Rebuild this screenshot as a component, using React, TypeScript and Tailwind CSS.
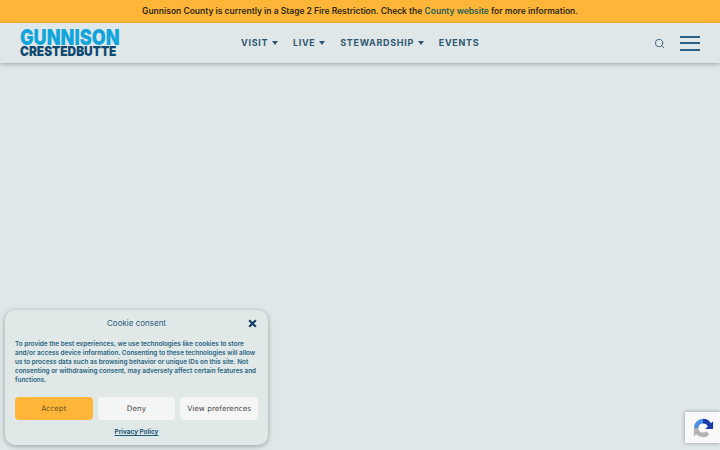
import { Search } from "lucide-react";

const navItems = [
  { label: "VISIT", caret: true },
  { label: "LIVE", caret: true },
  { label: "STEWARDSHIP", caret: true },
  { label: "EVENTS", caret: false },
];

function Caret() {
  return <span className="ml-[4px] h-0 w-0 border-x-[3.5px] border-t-[4px] border-x-transparent border-t-[#2f5670]" />;
}

function Logo() {
  return (
    <div className="flex w-[100px] flex-col items-start font-['Inter',sans-serif] font-black">
      <div className="h-[17px] origin-left scale-x-[0.82] text-[22px] leading-[17px] whitespace-nowrap text-[#12a5dc]">GUNNISON</div>
      <div className="h-[11px] origin-left scale-x-[0.87] text-[13.700px] leading-[11px] whitespace-nowrap text-[#0f4a70]">CRESTEDBUTTE</div>
    </div>
  );
}

function RecaptchaBadge() {
  return (
    <div className="absolute right-0 bottom-[7px] flex h-[31px] w-[35px] items-center justify-end bg-[#f9f9f9] pr-[6px] shadow-[0_0_4px_rgba(0,0,0,0.35)]">
      <svg width="22" height="22" viewBox="0 0 24 24" fill="none">
        <path d="M7 12a5 5 0 0 1 5-5V2A10 10 0 0 0 2 12h5z" fill="#4a90e2" />
        <path d="M12 2a10 10 0 0 1 8.600 4.900L23 4.500V13h-8.500l2.800-2.800A5.500 5.500 0 0 0 12 7V2z" fill="#1c3aa9" />
        <path d="M2 12h5a5 5 0 0 0 8.500 3.500l3.600 3.500A10 10 0 0 1 4.500 18.800L2 21.500V12z" fill="#b4b4b4" />
      </svg>
    </div>
  );
}

function CookieBox() {
  return (
    <div className="absolute bottom-[5px] left-[5px] flex h-[135px] w-[263px] flex-col rounded-[10px] bg-[#e0e8e8] px-[10px] font-['Inter',sans-serif] shadow-[0_1px_5px_rgba(0,0,0,0.32)]">
      <div className="relative flex h-[26px] items-center justify-center text-[8px] text-[#2b5c78]">
        Cookie consent
        <svg className="absolute top-[9px] right-[1px]" width="9" height="9" viewBox="0 0 9 9">
          <path d="M1.200 1.200l6.600 6.600M7.800 1.200L1.200 7.800" stroke="#123f63" strokeWidth="2.200" />
        </svg>
      </div>
      <p className="mt-[4px] h-[45px] text-[6.400px] leading-[9px] font-semibold text-[#2b6580]">
        To provide the best experiences, we use technologies like cookies to store<br />
        and/or access device information. Consenting to these technologies will allow<br />
        us to process data such as browsing behavior or unique IDs on this site. Not<br />
        consenting or withdrawing consent, may adversely affect certain features and<br />
        functions.
      </p>
      <div className="mt-[12px] flex gap-[5px] font-['DejaVu_Sans',sans-serif] text-[7.400px]">
        <button className="h-[23px] w-[78px] rounded-[4px] bg-[#ffb537] text-[#65562a]">Accept</button>
        <button className="h-[23px] w-[78px] rounded-[4px] bg-[#f4f6f6] text-[#4a4a4a]">Deny</button>
        <button className="h-[23px] w-[78px] rounded-[4px] bg-[#f4f6f6] text-[#4a4a4a]">View preferences</button>
      </div>
      <div className="mt-[8px] text-center text-[6.400px] font-bold text-[#1d5878] underline">Privacy Policy</div>
    </div>
  );
}

export default function App() {
  return (
    <div className="relative flex h-[450px] w-[720px] flex-col overflow-hidden bg-[#dfe7e9] font-['Inter',sans-serif]">
      <div className="flex h-[23px] items-center justify-center bg-[#ffb537] pb-[1px] text-[8.500px] font-semibold text-[#2c2a1c]">
        <span>
          Gunnison County is currently in a Stage 2 Fire Restriction. Check the{" "}
          <span className="text-[#1e6058]">County website</span> for more information.
        </span>
      </div>
      <header className="relative flex h-[40px] items-center bg-[#dfe7e9] px-[20px] shadow-[0_1px_4px_rgba(0,0,0,0.3)]">
        <Logo />
        <nav className="ml-[121px] flex items-center gap-[14.700px] text-[9px] font-bold tracking-[0.700px] text-[#2f5670]">
          {navItems.map((item) => (
            <div key={item.label} className="flex items-center">
              {item.label}
              {item.caret && <Caret />}
            </div>
          ))}
        </nav>
        <div className="ml-auto flex items-center gap-[15px]">
          <Search size={11} strokeWidth={2} className="text-[#3d5f76]" />
          <div className="flex w-[20px] flex-col gap-[4.500px]">
            <span className="h-[2px] bg-[#2c6288]" />
            <span className="h-[2px] bg-[#2c6288]" />
            <span className="h-[2px] bg-[#2c6288]" />
          </div>
        </div>
      </header>
      <main className="flex-1" />
      <CookieBox />
      <RecaptchaBadge />
    </div>
  );
}
